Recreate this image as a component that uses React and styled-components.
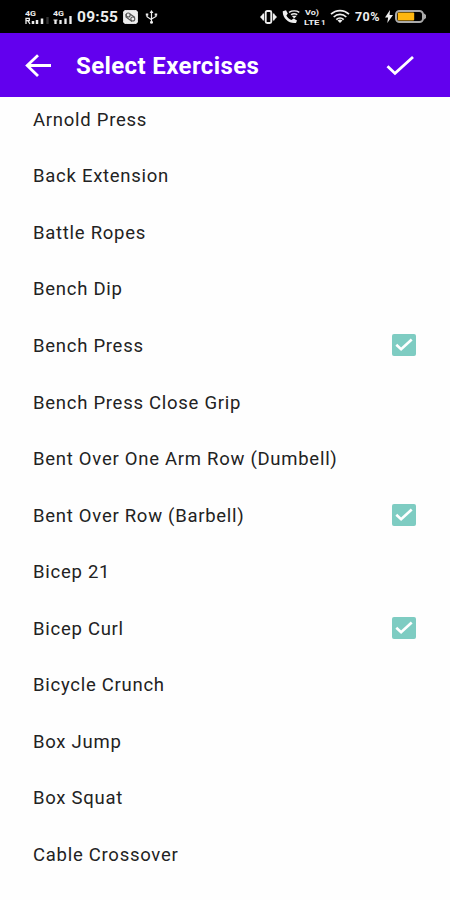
import styled, { createGlobalStyle } from 'styled-components';

const GlobalStyle = createGlobalStyle`
  * {
    box-sizing: border-box;
  }

  body {
    margin: 0;
    background: #fefefe;
    font-family: Roboto, 'Liberation Sans', sans-serif;
  }
`;

const Screen = styled.div`
  display: flex;
  flex-direction: column;
  width: 450px;
  height: 900px;
  overflow: hidden;
`;

const StatusBar = styled.div`
  display: flex;
  flex: none;
  justify-content: space-between;
  align-items: center;
  height: 33px;
  padding: 0 23px 0 25px;
  background: #000;
  color: #eee;
`;

const StatusGroup = styled.div`
  display: flex;
  align-items: center;
`;

const StatusIcon = styled.svg`
  display: block;
  flex: none;
  margin-left: ${({ $gap }) => $gap || 0}px;
  fill: none;
  stroke: #eee;

  text {
    fill: #eee;
    stroke: none;
    font-weight: 700;
  }
`;

const Time = styled.span`
  width: 42px;
  margin-left: 4px;
  font-size: 15.5px;
  font-weight: 700;
  line-height: 32px;
  letter-spacing: 0.25px;
  white-space: nowrap;
`;

const Percent = styled.span`
  width: 26px;
  margin-left: 5px;
  font-size: 12.5px;
  font-weight: 700;
  line-height: 34px;
  letter-spacing: 0.4px;
  white-space: nowrap;
`;

const Toolbar = styled.header`
  display: flex;
  flex: none;
  align-items: center;
  height: 64px;
  padding: 2px 32px 0 24px;
  background: #6200ee;
  color: #fff;
`;

const Title = styled.h1`
  flex: 1;
  margin: 0;
  font-size: 24px;
  font-weight: 700;
  line-height: 30px;
  letter-spacing: 0.38px;
`;

const IconButton = styled.button`
  display: flex;
  margin: 0 ${({ $gap }) => $gap || 0}px 0 0;
  padding: 0;
  border: 0;
  background: none;
  color: inherit;

  svg {
    fill: none;
    stroke: currentColor;
    stroke-width: 2.8;
  }
`;

const ListViewport = styled.main`
  flex: 1;
  min-height: 0;
  overflow: hidden;
`;

const List = styled.ul`
  display: grid;
  grid-auto-rows: 56.55px;
  margin: -6px 0 0;
  padding: 0;
  list-style: none;
`;

const Row = styled.li`
  display: flex;
  justify-content: space-between;
  align-items: center;
  padding: 0 34px 0 33px;
`;

const Name = styled.span`
  padding-top: 1px;
  color: #222;
  font-size: 18.5px;
  line-height: 24px;
  letter-spacing: 0.73px;
  white-space: nowrap;
`;

const Checkbox = styled.span`
  display: flex;
  justify-content: center;
  align-items: center;
  width: 24px;
  height: 22px;
  border-radius: 2px;
  background: #7eccc2;

  svg {
    fill: none;
    stroke: #fff;
    stroke-width: 2.6;
  }
`;

const exercises = [
  { name: 'Arnold Press' },
  { name: 'Back Extension' },
  { name: 'Battle Ropes' },
  { name: 'Bench Dip' },
  { name: 'Bench Press', selected: true },
  { name: 'Bench Press Close Grip' },
  { name: 'Bent Over One Arm Row (Dumbell)' },
  { name: 'Bent Over Row (Barbell)', selected: true },
  { name: 'Bicep 21' },
  { name: 'Bicep Curl', selected: true },
  { name: 'Bicycle Crunch' },
  { name: 'Box Jump' },
  { name: 'Box Squat' },
  { name: 'Cable Crossover' }
];

const RoamingSignal = () => (
  <StatusIcon width="25" height="16" viewBox="0 0 25 16">
    <text x="0" y="6.5" fontSize="8" textLength="11" lengthAdjust="spacingAndGlyphs">
      4G
    </text>
    <path d="M1 15V9.3h3.3v2.4H1.5M3 12l2 3" strokeWidth="1.3" />
    <path d="M8 15v-3M12 15v-4M17 15V9.5" strokeWidth="2.5" />
    <path d="M22.5 15V8" stroke="#333" strokeWidth="2.3" />
  </StatusIcon>
);

const Signal = () => (
  <StatusIcon $gap={3} width="20" height="16" viewBox="0 0 20 16">
    <text x="0" y="6.5" fontSize="8" textLength="11" lengthAdjust="spacingAndGlyphs">
      4G
    </text>
    <path d="M2.5 15v-4M7.5 15v-4M12.5 15V9.5M17.5 15V7" strokeWidth="2.3" />
    <path d="M.5 11h4" strokeWidth="1" />
  </StatusIcon>
);

const AppBadge = () => (
  <StatusIcon $gap={4} width="15" height="14" viewBox="0 0 15 14">
    <rect x=".3" y=".3" width="14.4" height="13.4" rx="3.2" fill="#eee" />
    <g stroke="#555" strokeWidth="1.1">
      <circle cx="5.2" cy="5" r="2" />
      <circle cx="9.8" cy="9" r="2" />
      <path d="M3 4v3l6 4.5M7 4l5 3.5" />
    </g>
  </StatusIcon>
);

const Usb = () => (
  <StatusIcon $gap={7} width="13" height="14" viewBox="0 0 13 14">
    <path d="M6.5 2v10M2 4.5v2.2l4.5 3M11 4v2.5L6.5 9" strokeWidth="1.2" />
    <path d="M6.5 0l2 3h-4zM.8 3.5h2.5v2H.8zM9.7 3.5h2.5v2H9.7z" fill="#eee" stroke="none" />
    <circle cx="6.5" cy="12.3" r="1.5" fill="#eee" stroke="none" />
  </StatusIcon>
);

const Vibrate = () => (
  <StatusIcon width="17" height="14" viewBox="0 0 17 14">
    <rect x="5.7" y="1" width="5.6" height="12" rx="1.5" strokeWidth="1.9" />
    <path d="M3.4 3.5v7M13.6 3.5v7" strokeWidth="1.4" />
    <path d="M3.2 3.8L0 7l3.2 3.2zM13.8 3.8L17 7l-3.2 3.2z" fill="#eee" stroke="none" />
  </StatusIcon>
);

const WifiCall = () => (
  <StatusIcon $gap={5} width="18" height="15" viewBox="0 0 18 15">
    <path
      d="M.8 2.2L4 1.2l1.8 3.3-1.4 1.9c1 2 2.8 3.7 5 4.6l2.2-1.4 3.4 2-1 2.3C7.5 15.2.2 9.2.8 2.2z"
      fill="#eee"
      stroke="none"
    />
    <path d="M7 3.3c3-1.8 7.5-1.8 10.3 0M9 5.6c2-1.1 4.5-1.1 6.3 0" strokeWidth="1.4" />
    <path d="M9.7 6.8h5L12.2 9.6z" fill="#eee" stroke="none" />
  </StatusIcon>
);

const Volte = () => (
  <StatusIcon $gap={4} width="22" height="16" viewBox="0 0 22 16">
    <text x="1" y="6" fontSize="7.5" textLength="14" lengthAdjust="spacingAndGlyphs">
      Vo)
    </text>
    <text x="0" y="15.5" fontSize="8" textLength="15.5" lengthAdjust="spacingAndGlyphs">
      LTE
    </text>
    <text x="17" y="15.5" fontSize="8">
      1
    </text>
  </StatusIcon>
);

const Wifi = () => (
  <StatusIcon $gap={4} width="20" height="15" viewBox="0 0 20 15">
    <path
      d="M1 5.2C6 .4 14 .4 19 5.2M3.7 8C7.3 4.5 12.7 4.5 16.3 8M6.3 10.7c2.1-2 5.3-2 7.4 0"
      strokeWidth="1.7"
    />
    <path d="M7.5 11.5c1.5-1.2 3.5-1.2 5 0L10 14z" fill="#eee" stroke="none" />
  </StatusIcon>
);

const Bolt = () => (
  <StatusIcon $gap={4} width="8" height="13" viewBox="0 0 8 13">
    <path d="M5 0L0 7.4h3.1L2.3 13 8 5H4.6z" fill="#eee" stroke="none" />
  </StatusIcon>
);

const Battery = () => (
  <StatusIcon $gap={2} width="32" height="13" viewBox="0 0 32 13">
    <rect x="1" y="1" width="27" height="11" rx="3.5" stroke="#aaa" strokeWidth="2" />
    <rect x="2.7" y="2.5" width="16.5" height="8" rx="1" fill="#ffb70f" stroke="none" />
    <path d="M28.5 3l2.5 2v3l-2.5 2z" fill="#aaa" stroke="none" />
  </StatusIcon>
);

export default function App() {
  return (
    <>
      <GlobalStyle />
      <Screen>
        <StatusBar>
          <StatusGroup>
            <RoamingSignal />
            <Signal />
            <Time>09:55</Time>
            <AppBadge />
            <Usb />
          </StatusGroup>
          <StatusGroup>
            <Vibrate />
            <WifiCall />
            <Volte />
            <Wifi />
            <Percent>70%</Percent>
            <Bolt />
            <Battery />
          </StatusGroup>
        </StatusBar>

        <Toolbar>
          <IconButton $gap={24} aria-label="Back">
            <svg width="28" height="24" viewBox="0 0 28 24">
              <path d="M27 11.5H3M14 1.2L3.2 11.5 14 22" />
            </svg>
          </IconButton>
          <Title>Select Exercises</Title>
          <IconButton aria-label="Done">
            <svg width="32" height="22" viewBox="0 0 32 22">
              <path d="M1.5 11.2l7.5 7.2L27 2" />
            </svg>
          </IconButton>
        </Toolbar>

        <ListViewport>
          <List>
            {exercises.map(({ name, selected }) => (
              <Row key={name}>
                <Name>{name}</Name>
                {selected && (
                  <Checkbox role="checkbox" aria-checked="true" aria-label={name}>
                    <svg width="18" height="14" viewBox="0 0 18 14">
                      <path d="M1.3 6.8l4.8 4.5L16.7 1.5" />
                    </svg>
                  </Checkbox>
                )}
              </Row>
            ))}
          </List>
        </ListViewport>
      </Screen>
    </>
  );
}
